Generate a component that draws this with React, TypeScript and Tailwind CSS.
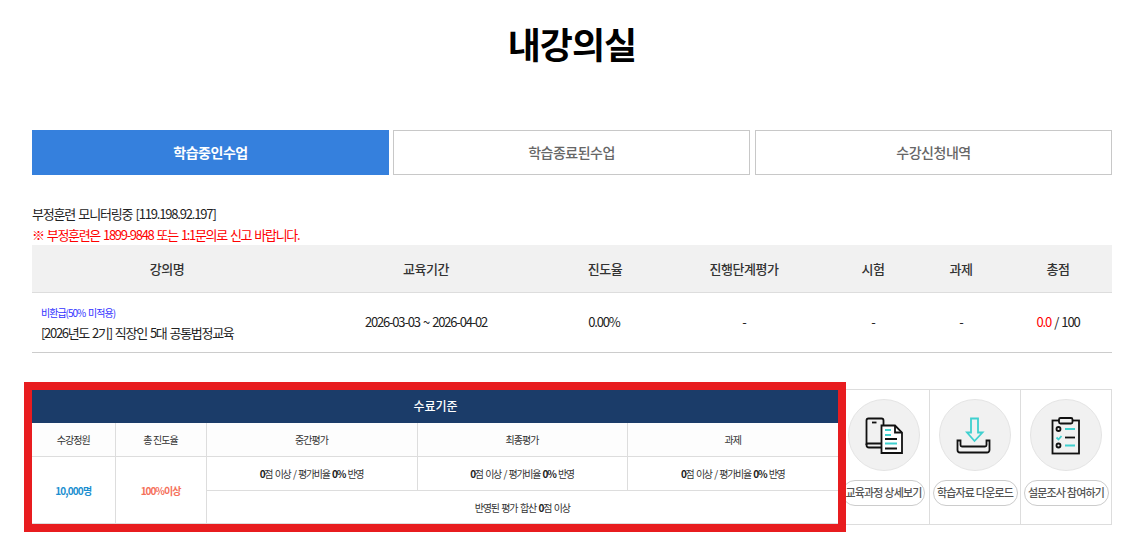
const font = { fontFamily: '"Noto Sans CJK KR", "Noto Sans", sans-serif' }

const columns = [
	{ label: '강의명', width: 'w-[270px]' },
	{ label: '교육기간', width: 'w-[248px]' },
	{ label: '진도율', width: 'w-[110px]' },
	{ label: '진행단계평가', width: 'w-[168px]' },
	{ label: '시험', width: 'w-[90px]' },
	{ label: '과제', width: 'w-[86px]' },
	{ label: '총점', width: 'w-[108px]' },
]

const Zero = () => <b className="font-bold text-[#222]">0</b>

const Score = () => (
	<span className="tracking-[-1.3px] [word-spacing:1.5px]">
		<Zero />점 이상 / 평가비율 <Zero />
		<b className="font-bold text-[#222]">%</b> 반영
	</span>
)

const PhoneDocIcon = () => (
	<svg viewBox="0 0 60 60" className="h-[60px] w-[60px]" fill="none" strokeWidth="1.8">
		<path d="M12.500 40V15.500a2 2 0 0 1 2-2h13a2 2 0 0 1 2 2V21" stroke="#111" />
		<path d="M12.500 38.500V40a2.500 2.500 0 0 0 2.500 2.500h12M12.500 38.500H27" stroke="#111" />
		<path d="M18 17.500h4.500" stroke="#111" />
		<path d="M27.500 20.500h13.500l7 7v20.500H27.500z" fill="#fff" stroke="#111" />
		<path d="M41 20.500v7h7" stroke="#111" />
		<path d="M31 25h6M31 30h6M31 38.500h12" stroke="#3fd0cf" />
		<path d="M31 34h12M31 43.500h12" stroke="#111" />
	</svg>
)

const DownloadIcon = () => (
	<svg viewBox="0 0 60 60" className="h-[60px] w-[60px]" fill="none" strokeWidth="1.8">
		<path d="M26 13.500h7V27.500h4.500L29.500 36 22 27.500h4z" stroke="#3fd0cf" />
		<path
			d="M12.500 35.500V45a2.500 2.500 0 0 0 2.500 2.500h27a2.500 2.500 0 0 0 2.500-2.500V35.500H41.500V40a1.500 1.500 0 0 1-1.500 1.500H17a1.500 1.500 0 0 1-1.500-1.500V35.500z"
			stroke="#111"
		/>
	</svg>
)

const SurveyIcon = () => (
	<svg viewBox="0 0 60 60" className="h-[60px] w-[60px]" fill="none" strokeWidth="1.8">
		<rect x="16.500" y="15.500" width="26.500" height="33" stroke="#111" />
		<rect x="23" y="13" width="13.500" height="5.500" rx="1.500" fill="#f1f1f1" stroke="#111" />
		<circle cx="22.500" cy="24" r="2" stroke="#111" />
		<circle cx="22.500" cy="40.500" r="2" stroke="#111" />
		<path d="M20.500 32.500l2 2 3-3.500" stroke="#3fd0cf" />
		<path d="M29 24h10M29 40.500h10" stroke="#3fd0cf" />
		<path d="M29 32.500h10" stroke="#111" />
	</svg>
)

const links = [
	{ label: '교육과정 상세보기', icon: <PhoneDocIcon />, pill: 'w-[83px]' },
	{ label: '학습자료 다운로드', icon: <DownloadIcon />, pill: 'w-[85px]' },
	{ label: '설문조사 참여하기', icon: <SurveyIcon />, pill: 'w-[85px]' },
]

export default function App() {
	return (
		<div className="h-[540px] w-[1135px] overflow-hidden bg-white text-[#222]" style={font}>
			<div className="ml-[32px] w-[1080px]">
				<h1 className="pt-[16px] text-center text-[36px] font-bold leading-[54px] tracking-[-1px] text-black">내강의실</h1>

				<div className="mt-[60px] flex">
					<div className="flex h-[45px] w-[357px] items-center justify-center bg-[#3580dd] text-[14px] font-bold tracking-[-0.5px] text-white">
						학습중인수업
					</div>
					<div className="ml-[4px] flex h-[45px] w-[357px] items-center justify-center border border-[#c8c8c8] text-[14px] font-medium tracking-[-0.5px] text-[#666]">
						학습종료된수업
					</div>
					<div className="ml-auto flex h-[45px] w-[357px] items-center justify-center border border-[#c8c8c8] text-[14px] font-medium tracking-[-0.5px] text-[#666]">
						수강신청내역
					</div>
				</div>

				<p className="mt-[29px] text-[13px] leading-[20px] tracking-[-1.18px] [word-spacing:1.5px]">부정훈련 모니터링중 [119.198.92.197]</p>
				<p className="mt-[1px] text-[13px] leading-[20px] tracking-[-1.32px] text-[#ff0000] [word-spacing:1.5px]">※ 부정훈련은 1899-9848 또는 1:1문의로 신고 바랍니다.</p>

				<table className="w-full table-fixed">
					<thead>
						<tr className="h-[47px] border-b border-[#ddd] bg-[#f1f1f1]">
							{columns.map(col => (
								<th key={col.label} className={`${col.width} text-[13px] font-medium tracking-[-0.5px] text-[#333]`}>
									{col.label}
								</th>
							))}
						</tr>
					</thead>
					<tbody>
						<tr className="h-[60px] border-b border-[#ccc] text-center text-[13px] tracking-[-1.19px] [word-spacing:1.5px]">
							<td className="pl-[9px] pt-[3px] text-left">
								<div className="text-[10px] leading-[16px] tracking-[-1px] text-[#3333ff]">비환급(50% 미적용)</div>
								<div className="mt-[2px] leading-[20px] tracking-[-1.31px]">[2026년도 2기] 직장인 5대 공통법정교육</div>
							</td>
							<td>2026-03-03 ~ 2026-04-02</td>
							<td className="pr-[2px]">0.00%</td>
							<td>-</td>
							<td>-</td>
							<td>-</td>
							<td>
								<span className="text-[#ff0000]">0.0</span> / 100
							</td>
						</tr>
					</tbody>
				</table>

				<div className="mt-[36px] flex">
					<div className="relative z-10 mt-[1px] h-[134px] w-[806px] outline-[8px] outline-[#e81c1f]">
						<div className="flex h-[33px] items-center justify-center bg-[#1b3c69] pl-[1px] text-[12px] font-medium text-white">수료기준</div>
						<table className="h-[101px] w-full table-fixed border-b border-[#ddd] text-center text-[10px] tracking-[-0.95px] text-[#333]">
							<tbody>
								<tr className="h-[34px] border-b border-[#ddd] bg-[#fdfdfd]">
									<td className="w-[83px] border-r border-[#ddd]">수강정원</td>
									<td className="w-[91px] border-r border-[#ddd]">총 진도율</td>
									<td className="w-[211px] border-r border-[#ddd]">중간평가</td>
									<td className="w-[210px] border-r border-[#ddd]">최종평가</td>
									<td className="w-[211px]">과제</td>
								</tr>
								<tr className="h-[34px] border-b border-[#ddd]">
									<td rowSpan={2} className="border-r border-[#ddd] font-bold tracking-[-0.85px] text-[#1c8fd0]">10,000명</td>
									<td rowSpan={2} className="border-r border-[#ddd] font-bold tracking-[-1px] text-[#f5705a]">100%이상</td>
									<td className="border-r border-[#ddd]"><Score /></td>
									<td className="border-r border-[#ddd]"><Score /></td>
									<td><Score /></td>
								</tr>
								<tr className="h-[33px]">
									<td colSpan={3} className="tracking-[-1.2px] [word-spacing:1.5px]">반영된 평가 합산 <Zero />점 이상</td>
								</tr>
							</tbody>
						</table>
					</div>

					<div className="flex h-[136px] w-[274px] border-y border-r border-[#ddd]">
						{links.map(link => (
							<div key={link.label} className="flex w-[91px] shrink-0 flex-col items-center border-r border-[#ddd] pt-[9px] first:w-[92px] last:w-[90px] last:border-r-0">
								<div className="flex h-[72px] w-[72px] shrink-0 items-center justify-center rounded-full border border-[#e4e4e4] bg-[#f1f1f1]">
									{link.icon}
								</div>
								<div className={`${link.pill} mt-[9px] flex h-[26px] shrink-0 items-center justify-center whitespace-nowrap rounded-full border border-[#ccc] text-[11px] font-medium tracking-[-0.8px] text-[#555]`}>
									{link.label}
								</div>
							</div>
						))}
					</div>
				</div>
			</div>
		</div>
	)
}
